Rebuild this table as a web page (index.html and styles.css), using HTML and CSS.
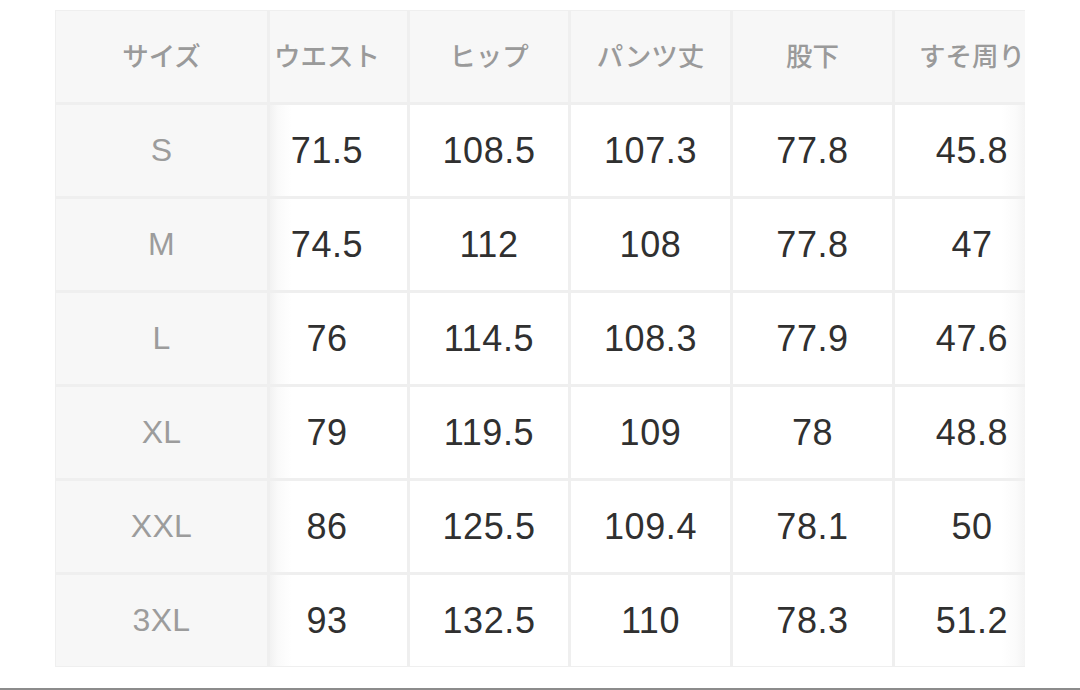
FILE: index.html
```html
<!DOCTYPE html>
<html lang="ja">
<head>
<meta charset="utf-8">
<title>サイズ表</title>
<link rel="stylesheet" href="styles.css">
</head>
<body>
<div class="page">
  <div class="table-wrap">
    <div class="size-table">
      <div class="th">サイズ</div>
      <div class="th c2">ウエスト</div>
      <div class="th">ヒップ</div>
      <div class="th">パンツ丈</div>
      <div class="th">股下</div>
      <div class="th c6">すそ周り</div>

      <div class="lab">S</div>
      <div class="td c2">71.5</div>
      <div class="td">108.5</div>
      <div class="td">107.3</div>
      <div class="td">77.8</div>
      <div class="td c6">45.8</div>

      <div class="lab">M</div>
      <div class="td c2">74.5</div>
      <div class="td">112</div>
      <div class="td">108</div>
      <div class="td">77.8</div>
      <div class="td c6">47</div>

      <div class="lab">L</div>
      <div class="td c2">76</div>
      <div class="td">114.5</div>
      <div class="td">108.3</div>
      <div class="td">77.9</div>
      <div class="td c6">47.6</div>

      <div class="lab">XL</div>
      <div class="td c2">79</div>
      <div class="td">119.5</div>
      <div class="td">109</div>
      <div class="td">78</div>
      <div class="td c6">48.8</div>

      <div class="lab">XXL</div>
      <div class="td c2">86</div>
      <div class="td">125.5</div>
      <div class="td">109.4</div>
      <div class="td">78.1</div>
      <div class="td c6">50</div>

      <div class="lab">3XL</div>
      <div class="td c2">93</div>
      <div class="td">132.5</div>
      <div class="td">110</div>
      <div class="td">78.3</div>
      <div class="td c6">51.2</div>
    </div>
  </div>
  <div class="bottom-rule"></div>
</div>
</body>
</html>
```

FILE: styles.css
```css
html, body {
  margin: 0;
  padding: 0;
  background: #ffffff;
}

.page {
  width: 1080px;
  height: 690px;
  overflow: hidden;
  padding-top: 10px;
  box-sizing: border-box;
  display: flex;
  flex-direction: column;
}

.table-wrap {
  margin-left: 55px;
  width: 970px;
  overflow: hidden;
  border-top: 1px solid #efefef;
  border-left: 1px solid #efefef;
  border-bottom: 1px solid #efefef;
  box-sizing: border-box;
}

.size-table {
  display: grid;
  grid-template-columns: 211px 137px 158px 159px 159px 130px;
  grid-auto-rows: 91px;
  gap: 3px;
  background: #efefef;
}

.th,
.lab,
.td {
  display: flex;
  align-items: center;
  justify-content: center;
  white-space: nowrap;
  box-sizing: border-box;
}

.th {
  background: #f7f7f7;
  color: #9a9a9a;
  font-family: "Noto Sans CJK JP", "Noto Sans", sans-serif;
  font-size: 26.5px;
  font-weight: 500;
  padding-bottom: 5px;
}

.lab {
  background: #f7f7f7;
  color: #9c9c9c;
  font-family: "Liberation Sans", Arial, sans-serif;
  font-size: 32px;
  letter-spacing: 0.3px;
}

.td {
  background: #ffffff;
  color: #303030;
  font-family: "Liberation Sans", Arial, sans-serif;
  font-size: 36px;
  letter-spacing: 0.6px;
}

.c2 {
  padding-right: 23px;
}

.td.c2 {
  background: linear-gradient(to right, #f2f2f2 0px, #fafafa 8px, #ffffff 22px);
}

.c6 {
  padding-left: 24px;
}

.td.c6 {
  background: linear-gradient(to left, #f4f4f4 0px, #fbfbfb 10px, #ffffff 24px);
}

.bottom-rule {
  margin-top: 21px;
  height: 2px;
  background: #8c8c8c;
}
```
